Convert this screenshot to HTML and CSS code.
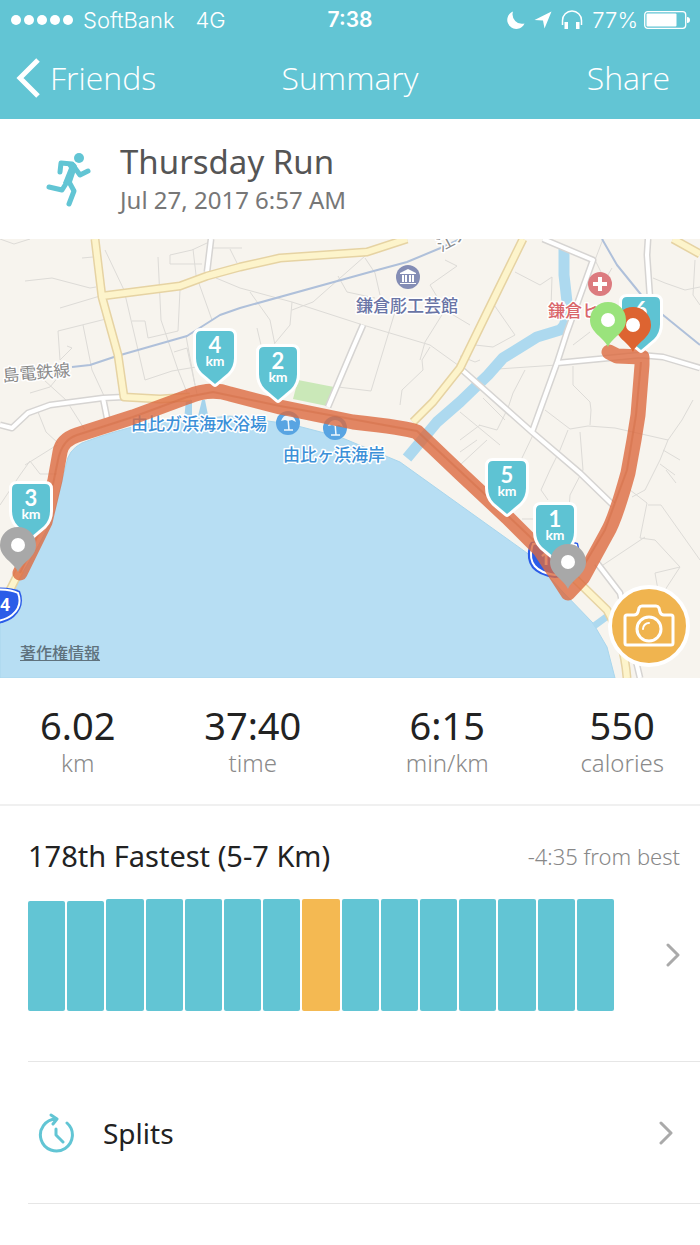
FILE: index.html
```
<!DOCTYPE html>
<html lang="en">
<head>
    <meta charset="UTF-8">
    <meta name="viewport" content="width=device-width, initial-scale=1.0">
    <title>Summary</title>
    <link rel="stylesheet" href="styles.css">
</head>
<body>

<header class="top">
    <div class="status-bar">
        <div class="status-left">
            <svg class="signal" width="64" height="12" viewBox="0 0 64 12" aria-hidden="true">
                <circle cx="6" cy="6" r="5"/><circle cx="19" cy="6" r="5"/><circle cx="32" cy="6" r="5"/><circle cx="45" cy="6" r="5"/><circle cx="58" cy="6" r="5"/>
            </svg>
            <span>SoftBank</span>
            <span class="network">4G</span>
        </div>
        <div class="status-time">7:38</div>
        <div class="status-right">
            <svg width="18" height="18" viewBox="0 0 18 18" aria-hidden="true"><path fill="#fff" d="M6 0.500A9 9 0 1 0 17.500 12.500A9.500 9.500 0 0 1 6 0.500z"/></svg>
            <svg width="18" height="18" viewBox="0 0 18 18" aria-hidden="true"><path fill="#fff" d="M17.500 0.500L0.500 9L9 9.500L10.500 17.500z"/></svg>
            <svg width="22" height="20" viewBox="0 0 22 20" aria-hidden="true"><path fill="none" stroke="#fff" stroke-width="1.500" d="M1.500 15V10.500a9.500 9.500 0 0 1 19 0V15"/><path fill="#fff" d="M3.500 12h3.500v7H3.500zM15 12h3.500v7H15z"/></svg>
            <span>77%</span>
            <svg class="battery" width="46" height="20" viewBox="0 0 46 20" aria-hidden="true"><rect x="0.700" y="1.700" width="41" height="16.600" rx="3" fill="none" stroke="#fff" stroke-width="1.300"/><rect x="2.500" y="3.500" width="30" height="13" rx="1" fill="#fff"/><path fill="#fff" d="M43 7q3 0 3 3t-3 3z"/></svg>
        </div>
    </div>
    <nav class="nav-bar">
        <a class="nav-back" href="#friends">
            <svg width="24" height="40" viewBox="0 0 24 40" aria-hidden="true"><path fill="none" stroke="#fff" stroke-width="5" d="M22 2L4 20L22 38"/></svg>
            Friends
        </a>
        <h1 class="nav-title">Summary</h1>
        <button class="nav-share" type="button">Share</button>
    </nav>
</header>

<main>
    <section class="activity">
        <svg class="runner" width="46" height="58" viewBox="0 0 46 58" aria-hidden="true">
            <circle cx="33" cy="8" r="5"/>
            <path class="limb" d="M14 22L15 13L26 14L34 25L42 21M22 30L28 41L23 54M21 32L16 40L3 37"/>
            <path d="M20 13L27 12Q33 15 30 20L25 35L17 33L23 18z"/>
        </svg>
        <div>
            <h2 class="activity-name">Thursday Run</h2>
            <p class="activity-date">Jul 27, 2017 6:57 AM</p>
        </div>
    </section>

    <section class="map">
        <svg class="map-canvas" viewBox="0 239 700 439" role="img" aria-label="Route map">
            <defs>
                <path id="shield" d="M-14 -56H14Q19 -56 19 -51V-29Q19 -20 13 -14L0 -3L-13 -14Q-19 -20 -19 -29V-51Q-19 -56 -14 -56z"/>
                <path id="pin" d="M0 27C-4 17 -18 13 -18 0A18 18 0 0 1 18 0C18 13 4 17 0 27z"/>
                <g id="parasol">
                    <circle r="12" fill="#58a4e2"/>
                    <path fill="none" stroke="#eef6fc" stroke-width="1.500" d="M0 -5L1 7M-4 7H5"/>
                    <path fill="#eef6fc" d="M-7 -2Q-5 -8 0 -8Q6 -8 8 -1L4 -3L0 -2L-3 -3z"/>
                </g>
            </defs>

            <rect y="239" width="700" height="439" fill="#f7f4ee"/>

            <!-- small streets -->
            <path class="street" d="M0 239L14 244L30 239M25 281L52 278L90 288L96 287M82 258L93 257M60 308L100 296M58 331L106 319M58 331L60 360L72 348L67 346M83 325L92 370L105 398M30 393L50 387L64 370M44 380L66 400L85 430M38 412L46 432L58 443M25 465L57 445M105 250L124 290L145 380L172 371L196 367M132 321L145 321L148 338L178 331L180 290M158 257L161 320L178 370L190 400M170 264V255L192 250L207 243M170 264H202M193 249L196 275L212 320M186 336L195 385M174 352L187 348L197 394M216 278L240 288L292 302L363 325L430 345L462 368M212 248H242M230 249L237 263M250 292L270 320L275 345M292 302L290 325L275 343M257 328L265 362L280 380M365 256L313 302L292 310M338 276L347 292L375 298M365 258L375 273L380 295M398 302L371 391L338 387M445 260L457 266L430 285L445 310L425 342L420 360M445 310L470 325M430 347L422 360L423 370L402 390L400 405"/>
            <path class="street" d="M515 272L540 285L552 277L551 308M490 299L515 335L493 347L475 345M460 356L475 362L480 360M498 369L557 365L605 361M525 370L513 393L508 408L497 430L479 425M460 412L500 445M460 440L480 425M460 452L477 440M460 465L487 440M483 398L505 420M573 366V385L590 402L591 410L590 425M545 410L570 429L588 426L615 428L668 440M568 430L560 450L550 470L541 490L548 500M580 432L583 470L570 495L569 510M533 435L521 460M693 400L682 420L668 440L660 460L645 490L632 497M660 464L675 475M666 470L676 483M663 450L680 460M573 345L590 332M603 239L595 260L605 280M605 280L612 268M653 278L665 283L685 290L700 287M695 260L693 295L700 305M630 490L647 503L640 538L655 540L680 567L655 573L658 590M661 505L648 505M600 567L645 537M661 505L700 560M680 567L665 590L640 600M522 519L535 519M0 505L20 475L30 461L40 474H57"/>

            <!-- railway -->
            <path class="rail" d="M72 367L90 365L117 356L187 336L220 315L240 308L370 272L407 262L443 247L460 239M602 239L617 265L647 302L700 345"/>

            <!-- park, river and sea -->
            <path fill="#cae8b8" d="M298 380L334 387L327 406L293 399z"/>
            <path class="river" d="M564 248V275L567 302Q568 325 560 330L537 337L503 358L488 375L460 402L437 422L407 458"/>
            <path class="sea" d="M0 678V592L16 584L30 560Q48 530 55 510L66 465Q68 450 82 443Q110 432 145 424L230 416L290 424L340 437L400 462L460 505L527 553L563 592L593 623L607 647L615 678z"/>
            <path class="river mouth" d="M594 626L609 615"/>
            <path fill="#a5d3ec" d="M186 400h6v20h-8zM202 400h3l4 20h-12z"/>

            <!-- main roads -->
            <path class="road-edge" d="M0 425L12 428L28 413L50 405L103 398L124 397M103 398L107 418M211 239L207 272M363 325L353 348L328 407M460 368L532 432L580 473L613 505M597 563L620 593L640 678M543 239L593 260L567 332L557 363L532 432M557 363L640 355L663 357L700 368M648 239L647 255L650 298"/>
            <path class="road" d="M0 425L12 428L28 413L50 405L103 398L124 397M103 398L107 418M211 239L207 272M363 325L353 348L328 407M460 368L532 432L580 473L613 505M597 563L620 593L640 678M543 239L593 260L567 332L557 363L532 432M557 363L640 355L663 357L700 368M648 239L647 255L650 298"/>
            <path class="highway-edge" d="M95 239L102 297L118 355L124 397L160 399L190 397M102 296L180 286L207 276L240 267L280 258L367 252L407 239M413 422L433 402L460 368L498 290L523 239M673 239L700 254M568 572L607 610Q624 640 627 678M20 570L9 592"/>
            <path class="highway" d="M95 239L102 297L118 355L124 397L160 399L190 397M102 296L180 286L207 276L240 267L280 258L367 252L407 239M413 422L433 402L460 368L498 290L523 239M673 239L700 254M568 572L607 610Q624 640 627 678M20 570L9 592"/>

            <!-- route signs -->
            <g class="sign">
                <path class="sign-base" d="M-12 588Q10 586 20 591Q26 606 14 617Q6 624 -12 625z"/>
                <path class="sign-ring" d="M-12 590Q9 588 18 593Q23 606 12 615Q5 621 -12 622"/>
                <text x="5" y="611">4</text>
                <path class="sign-base" d="M531 542Q555 536 578 543Q588 576 555 578Q522 574 529 545z"/>
                <path class="sign-ring" d="M533 544Q555 539 576 545Q584 573 555 575Q526 571 532 547z"/>
                <text x="545" y="565">1</text>
            </g>

            <!-- places -->
            <g class="place">
                <text class="place-grey" x="-14" y="382" transform="rotate(-5 0 382)">ノ島電鉄線</text>
                <text class="place-grey" x="441" y="252" transform="rotate(-28 441 252)">江ノ</text>
                <text class="place-violet" x="356" y="312">鎌倉彫工芸館</text>
                <text class="place-red" x="548" y="317">鎌倉ヒ</text>
                <text class="place-blue" x="131" y="430">由比ガ浜海水浴場</text>
                <text class="place-blue" x="283" y="461">由比ヶ浜海岸</text>
            </g>
            <circle cx="408" cy="277" r="12" fill="#848db5"/>
            <path fill="#fff" d="M400 273L408 269L416 273V274H400zM402 275h2v7h-2zM405 275h2v7h-2zM409 275h2v7h-2zM412 275h2v7h-2zM400 283h16v1h-16z"/>
            <circle cx="600" cy="284" r="12" fill="#dc7b7f"/>
            <path fill="#fff" d="M598 277h4v5h5v4h-5v5h-4v-5h-5v-4h5z"/>
            <use href="#parasol" x="288" y="423"/>
            <use href="#parasol" x="335" y="428"/>

            <!-- recorded track -->
            <path class="track" d="M609 352L617 356L642 357V365L638 415L634 440L628 473Q615 520 607 533L583 577L568 593L540 550L507 517L460 473L417 432Q408 428 353 422L280 407L230 394Q210 387 187 397L133 417L77 435Q62 440 60 452L55 480L45 522L20 573"/>
            <path class="track-line" d="M641 362L636 415L627 470L605 530L578 575M565 570L505 513L417 431L280 406L213 392L187 397L133 417L77 435Q62 440 58 460L46 518L20 573"/>

            <!-- km markers and pins -->
            <g class="marker">
                <use href="#shield" x="641" y="353"/><text class="marker-km" x="641" y="318">6</text>
                <use href="#shield" x="215" y="387"/><text class="marker-km" x="215" y="353">4</text><text x="215" y="366">km</text>
                <use href="#shield" x="278" y="403"/><text class="marker-km" x="278" y="369">2</text><text x="278" y="382">km</text>
                <use href="#shield" x="31" y="540"/><text class="marker-km" x="31" y="506">3</text><text x="31" y="519">km</text>
                <use href="#shield" x="507" y="517"/><text class="marker-km" x="507" y="483">5</text><text x="507" y="496">km</text>
                <use href="#shield" x="555" y="561"/><text class="marker-km" x="555" y="527">1</text><text x="555" y="540">km</text>
            </g>
            <use href="#pin" x="633" y="325" fill="#dd6431"/><circle cx="633" cy="325" r="7" fill="#fff"/>
            <use href="#pin" x="608" y="320" fill="#9ae37c"/><circle cx="608" cy="320" r="7" fill="#fff"/>
            <use href="#pin" x="18" y="545" fill="#a8a8a8"/><circle cx="18" cy="545" r="7" fill="#fff"/>
            <use href="#pin" x="568" y="562" fill="#a8a8a8"/><circle cx="568" cy="562" r="7" fill="#fff"/>
        </svg>
        <a class="map-legal" href="#legal">著作権情報</a>
        <button class="camera" type="button" aria-label="Add photo">
            <svg width="52" height="44" viewBox="0 0 52 44" aria-hidden="true">
                <path d="M4 11H11Q14 11 15 8L16 4Q17 2 19 2H33Q35 2 36 4L37 8Q38 11 41 11H48Q50 11 50 13V39Q50 41 48 41H4Q2 41 2 39V13Q2 11 4 11z"/>
                <circle cx="26" cy="25" r="12"/>
                <path class="glint" d="M20 25A6 6 0 0 1 26 19"/>
            </svg>
        </button>
    </section>

    <dl class="stats">
        <div class="stat"><dd>6.02</dd><dt>km</dt></div>
        <div class="stat"><dd>37:40</dd><dt>time</dt></div>
        <div class="stat"><dd>6:15</dd><dt>min/km</dt></div>
        <div class="stat"><dd>550</dd><dt>calories</dt></div>
    </dl>

    <section class="ranking">
        <div class="ranking-head">
            <h2>178th Fastest (5-7 Km)</h2>
            <span class="ranking-diff">-4:35 from best</span>
        </div>
        <a class="ranking-body" href="#ranking" aria-label="See ranking">
            <div class="chart">
                <span class="bar" style="height: 98%"></span>
                <span class="bar" style="height: 98%"></span>
                <span class="bar" style="height: 100%"></span>
                <span class="bar" style="height: 100%"></span>
                <span class="bar" style="height: 100%"></span>
                <span class="bar" style="height: 100%"></span>
                <span class="bar" style="height: 100%"></span>
                <span class="bar current" style="height: 100%"></span>
                <span class="bar" style="height: 100%"></span>
                <span class="bar" style="height: 100%"></span>
                <span class="bar" style="height: 100%"></span>
                <span class="bar" style="height: 100%"></span>
                <span class="bar" style="height: 100%"></span>
                <span class="bar" style="height: 100%"></span>
                <span class="bar" style="height: 100%"></span>
            </div>
            <svg class="chevron" width="14" height="24" viewBox="0 0 14 24" aria-hidden="true"><path d="M2 2L12 12L2 22"/></svg>
        </a>
    </section>

    <a class="row" href="#splits">
        <svg class="row-icon" width="38" height="42" viewBox="0 0 38 42" aria-hidden="true">
            <path d="M30 11A16 16 0 1 1 19 7M14 3L20 7L16 12M19 17V23L26 30"/>
        </svg>
        <span>Splits</span>
        <svg class="chevron" width="14" height="24" viewBox="0 0 14 24" aria-hidden="true"><path d="M2 2L12 12L2 22"/></svg>
    </a>
</main>

</body>
</html>
```

FILE: styles.css
```
* {
    box-sizing: border-box;
}

body {
    margin: 0;
    background-color: #fff;
    color: #222;
    font-family: "Noto Sans", "Noto Sans CJK JP", sans-serif;
}

h1, h2, p, dl, dd {
    margin: 0;
}

a {
    color: inherit;
    text-decoration: none;
}

button {
    border: none;
    padding: 0;
    color: inherit;
    font: inherit;
    background: none;
    cursor: pointer;
}

svg {
    display: block;
    flex: none;
}

/* Header */

.top {
    background-color: #62c5d4;
    color: #fff;
}

.status-bar {
    display: grid;
    grid-template-columns: 1fr auto 1fr;
    align-items: center;
    height: 39px;
    padding: 0 10px;
    font-family: Inter, sans-serif;
    font-size: 22px;
    font-weight: 300;
}

.status-left, .status-right {
    display: flex;
    align-items: center;
    gap: 9px;
}

.status-right {
    justify-content: flex-end;
}

.signal {
    fill: #fff;
}

.network {
    margin-left: 12px;
}

.status-time {
    font-size: 21px;
    font-weight: 600;
}

.battery {
    margin-left: -3px;
}

.nav-bar {
    display: grid;
    grid-template-columns: 1fr auto 1fr;
    align-items: center;
    height: 80px;
    padding: 0 16px 3px;
    font-family: "Open Sans", sans-serif;
    font-size: 32px;
    font-weight: 300;
}

.nav-back {
    display: flex;
    align-items: center;
    gap: 10px;
}

.nav-title {
    font-size: 32px;
    font-weight: 300;
}

.nav-share {
    justify-self: end;
    padding-right: 14px;
}

/* Activity */

.activity {
    display: flex;
    align-items: center;
    gap: 28px;
    height: 120px;
    padding: 0 46px;
}

.runner {
    fill: #62c5d4;
}

.limb {
    fill: none;
    stroke: #62c5d4;
    stroke-width: 5;
    stroke-linecap: round;
    stroke-linejoin: round;
}

.activity-name {
    color: #555;
    font-size: 33px;
    font-weight: 400;
    line-height: 42px;
}

.activity-date {
    color: #777;
    font-size: 24px;
    line-height: 34px;
}

/* Map */

.map {
    position: relative;
}

.map-canvas {
    width: 100%;
    height: auto;
}

.street, .rail, .river, .road, .road-edge, .highway, .highway-edge, .track, .track-line {
    fill: none;
    stroke-linejoin: round;
}

.street {
    stroke: #dddbd7;
}

.rail {
    stroke: #afc0da;
    stroke-width: 2;
}

.river {
    stroke: #add9ef;
    stroke-width: 11;
}

.mouth {
    stroke-width: 7;
}

.sea {
    fill: #b7def3;
    stroke: #a9d6ed;
}

.road-edge {
    stroke: #d6d4d2;
    stroke-width: 7;
}

.road {
    stroke: #fff;
    stroke-width: 4;
}

.highway-edge {
    stroke: #e6d3a3;
    stroke-width: 9;
}

.highway {
    stroke: #fdf4cb;
    stroke-width: 6;
}

.sign-base {
    fill: #2b5ce8;
}

.sign-ring {
    fill: none;
    stroke: #fff;
    stroke-width: 2;
}

.sign text {
    fill: #fff;
    font-size: 17px;
    font-weight: 700;
    text-anchor: middle;
}

.place {
    font-family: "Noto Sans CJK JP", sans-serif;
    font-size: 17px;
    font-weight: 500;
    paint-order: stroke;
    stroke: #fff;
    stroke-width: 3;
    stroke-linejoin: round;
}

.place-grey {
    fill: #8b8b8b;
    font-weight: 400;
}

.place-violet {
    fill: #6974a5;
}

.place-red {
    fill: #d9656b;
}

.place-blue {
    fill: #3c90d8;
}

.track {
    stroke: #dc6a40;
    stroke-width: 15;
    stroke-linecap: round;
    stroke-opacity: 0.8;
}

.track-line {
    stroke: #cf6a42;
    stroke-opacity: 0.4;
    stroke-width: 2;
}

.marker use {
    fill: #5ec3d3;
    paint-order: stroke;
    stroke: #fff;
    stroke-width: 6;
    stroke-linejoin: round;
}

.marker text {
    fill: #fff;
    font-family: Lato, sans-serif;
    font-size: 14px;
    font-weight: 700;
    text-anchor: middle;
}

.marker .marker-km {
    font-size: 22px;
}

.map-legal {
    position: absolute;
    bottom: 14px;
    left: 20px;
    color: #5f727d;
    font-family: "Noto Sans CJK JP", sans-serif;
    font-size: 16px;
    font-weight: 500;
    text-decoration: underline;
}

.camera {
    position: absolute;
    right: 10px;
    bottom: 11px;
    display: grid;
    place-items: center;
    width: 82px;
    height: 82px;
    border: 4px solid #fff;
    border-radius: 50%;
    background-color: #f0b44f;
}

.camera svg {
    fill: none;
    stroke: #fff;
    stroke-width: 3;
    stroke-linejoin: round;
}

.camera .glint {
    stroke-width: 2;
    stroke-linecap: round;
}

/* Stats */

.stats {
    display: grid;
    grid-template-columns: 4fr 5fr 5fr 4fr;
    padding: 23px 0 27px;
    border-bottom: 2px solid #f0f0f0;
    text-align: center;
}

.stat dd {
    font-size: 38px;
    font-weight: 400;
    line-height: 48px;
}

.stat dt {
    color: #8a8a8a;
    font-size: 24px;
    font-weight: 300;
    line-height: 28px;
}

/* Ranking */

.ranking {
    margin-left: 28px;
    padding: 30px 20px 50px 0;
    border-bottom: 1px solid #e6e6e6;
}

.ranking-head {
    display: flex;
    align-items: center;
    justify-content: space-between;
    margin-bottom: 23px;
}

.ranking-head h2 {
    font-size: 29px;
    font-weight: 400;
    line-height: 40px;
}

.ranking-diff {
    color: #888;
    font-size: 22px;
    font-weight: 300;
}

.ranking-body {
    display: flex;
    align-items: center;
    gap: 52px;
}

.chart {
    display: flex;
    flex: 1;
    align-items: flex-end;
    gap: 2px;
    height: 112px;
}

.bar {
    flex: 1;
    border-radius: 2px;
    background-color: #62c5d4;
}

.current {
    background-color: #f4b952;
}

.chevron {
    fill: none;
    stroke: #aaa;
    stroke-width: 3;
    stroke-linecap: round;
    stroke-linejoin: round;
}

/* Rows */

.row {
    display: flex;
    align-items: center;
    gap: 28px;
    height: 142px;
    margin-left: 28px;
    padding: 0 27px 0 9px;
    border-bottom: 1px solid #e6e6e6;
    font-size: 28px;
}

.row .chevron {
    margin-left: auto;
}

.row-icon {
    fill: none;
    stroke: #62c5d4;
    stroke-width: 3;
    stroke-linecap: round;
    stroke-linejoin: round;
}
```
